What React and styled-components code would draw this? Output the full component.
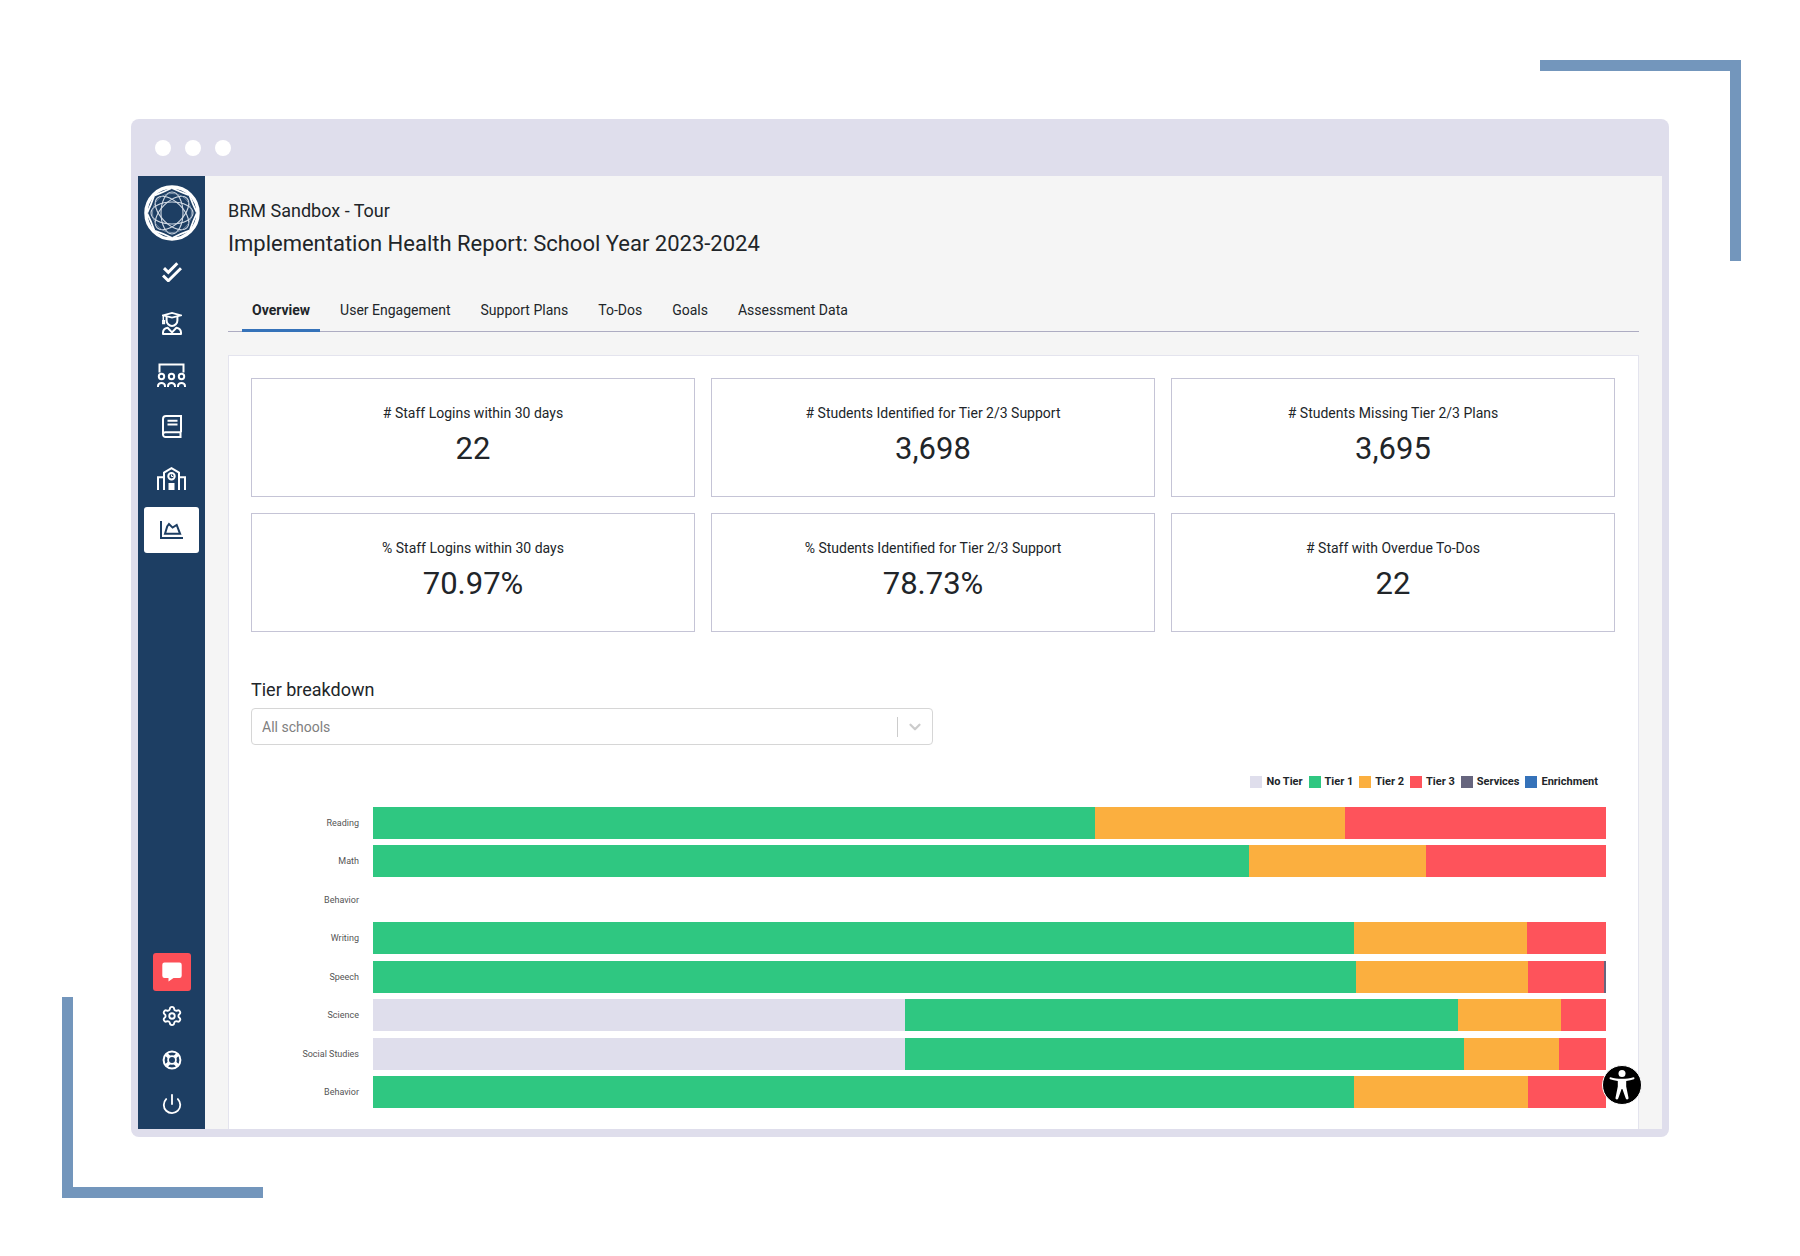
import styled, { createGlobalStyle } from "styled-components";
import { ChevronDown, Power, Settings } from "lucide-react";

const GlobalStyle = createGlobalStyle`
  * {
    box-sizing: border-box;
  }
  body {
    background-color: #ffffff;
    color: #212529;
    font-family: Roboto, "Liberation Sans", sans-serif;
    margin: 0;
  }
`;

const Page = styled.div`
  display: flex;
  flex-direction: column;
  min-height: 100vh;
  padding: 119px 131px;
  position: relative;
`;

const Corner = styled.div`
  border: 0 solid #7396bc;
  height: 201px;
  position: absolute;
  width: 201px;
`;

const CornerTop = styled(Corner)`
  border-width: 11px 11px 0 0;
  right: 59px;
  top: 60px;
`;

const CornerBottom = styled(Corner)`
  border-width: 0 0 11px 11px;
  bottom: 58px;
  left: 62px;
`;

const Window = styled.div`
  background-color: #dfdeec;
  border-radius: 8px;
  display: flex;
  flex: 1;
  flex-direction: column;
  padding: 0 7px 8px;
  position: relative;
`;

const TitleBar = styled.div`
  align-items: center;
  display: flex;
  gap: 14px;
  height: 57px;
  padding: 0 17px;
`;

const Dot = styled.span`
  background-color: #ffffff;
  border-radius: 50%;
  height: 16px;
  width: 16px;
`;

const Body = styled.div`
  background-color: #f5f5f5;
  display: flex;
  flex: 1;
`;

const SidebarWrapper = styled.aside`
  align-items: center;
  background-color: #1d3e63;
  display: flex;
  flex-direction: column;
  justify-content: space-between;
  padding: 9px 0 6px;
  width: 67px;
`;

const Nav = styled.nav`
  align-items: center;
  display: flex;
  flex-direction: column;
  gap: 8px;
`;

const NavItems = styled.div`
  display: flex;
  flex-direction: column;
  height: 304px;
  justify-content: space-between;
`;

const NavLink = styled.a`
  align-items: center;
  background-color: ${({ $active }) => ($active ? "#ffffff" : "transparent")};
  border-radius: 3px;
  color: ${({ $active }) => ($active ? "#1d3e63" : "#ffffff")};
  display: flex;
  height: 46px;
  justify-content: center;
  width: 55px;
`;

const Tools = styled.div`
  display: flex;
  flex-direction: column;
  gap: 6px;
`;

const ToolButton = styled.button`
  align-items: center;
  background-color: ${({ $alert }) => ($alert ? "#fc4f57" : "transparent")};
  border: 0;
  border-radius: 3px;
  color: #ffffff;
  cursor: pointer;
  display: flex;
  height: 38px;
  justify-content: center;
  padding: 0;
  width: 38px;
`;

const Main = styled.main`
  display: flex;
  flex: 1;
  flex-direction: column;
  padding: 20px 23px 0;
`;

const Account = styled.p`
  font-size: 18px;
  line-height: 30px;
  margin: 0;
`;

const Title = styled.h1`
  font-size: 22px;
  font-weight: 400;
  line-height: 36px;
  margin: 0;
`;

const Tabs = styled.div`
  border-bottom: 1px solid #adacc2;
  display: flex;
  gap: 10px;
  margin-top: 29px;
  padding: 0 14px;
`;

const Tab = styled.button`
  background: none;
  border: 0;
  border-bottom: 3px solid
    ${({ $active }) => ($active ? "#3572b9" : "transparent")};
  color: inherit;
  cursor: pointer;
  font-family: inherit;
  font-size: 14px;
  font-weight: ${({ $active }) => ($active ? 700 : 400)};
  height: 41px;
  margin-bottom: -1px;
  padding: 0 10px;
`;

const Panel = styled.section`
  background-color: #ffffff;
  border: 1px solid #e4e4ee;
  border-bottom: 0;
  flex: 1;
  margin-top: 23px;
  padding: 22px 23px 18px 22px;
`;

const Cards = styled.div`
  display: grid;
  gap: 16px;
  grid-template-columns: repeat(3, 1fr);
`;

const Card = styled.div`
  align-items: center;
  border: 1px solid #c5c4d6;
  display: flex;
  flex-direction: column;
  height: 119px;
  padding-top: 22px;
`;

const CardLabel = styled.p`
  font-size: 14px;
  line-height: 24px;
  margin: 0;
`;

const CardValue = styled.p`
  font-size: 31px;
  line-height: 48px;
  margin: 0;
`;

const FieldLabel = styled.label`
  display: block;
  font-size: 18px;
  line-height: 28px;
  margin-top: 44px;
`;

const SelectBox = styled.div`
  align-items: center;
  border: 1px solid #d6d6d6;
  border-radius: 4px;
  color: #cccccc;
  display: flex;
  height: 37px;
  margin-top: 4px;
  width: 50%;
`;

const Select = styled.select`
  appearance: none;
  background: none;
  border: 0;
  color: #808080;
  flex: 1;
  font-family: inherit;
  font-size: 14px;
  height: 100%;
  padding: 0 10px;
`;

const SelectArrow = styled.span`
  align-items: center;
  border-left: 1px solid #cccccc;
  display: flex;
  height: 20px;
  justify-content: center;
  pointer-events: none;
  width: 35px;
`;

const Legend = styled.ul`
  display: flex;
  gap: 6px;
  justify-content: flex-end;
  list-style: none;
  margin: 29px 17px 0 0;
  padding: 0;
`;

const LegendItem = styled.li`
  align-items: center;
  display: flex;
  font-size: 11px;
  font-weight: 700;
  gap: 4px;
  line-height: 16px;
`;

const Swatch = styled.span`
  background-color: ${({ $color }) => $color};
  height: 12px;
  width: 12px;
`;

const Chart = styled.div`
  display: flex;
  flex-direction: column;
  height: 301px;
  justify-content: space-between;
  margin-top: 17px;
  padding-right: 9px;
`;

const Row = styled.div`
  align-items: center;
  display: flex;
  height: 32px;
`;

const RowLabel = styled.span`
  color: #555555;
  font-size: 9px;
  padding-right: 14px;
  text-align: right;
  width: 122px;
`;

const Bar = styled.div`
  display: flex;
  flex: 1;
  height: 100%;
`;

const Segment = styled.div`
  background-color: ${({ $color }) => $color};
`;

const AccessButton = styled.button`
  align-items: center;
  background-color: #000000;
  border: 1px solid #ffffff;
  border-radius: 50%;
  bottom: 32px;
  cursor: pointer;
  display: flex;
  height: 40px;
  justify-content: center;
  padding: 0;
  position: absolute;
  right: 27px;
  width: 40px;
`;

const Svg = ({ width, height, children }) => (
  <svg
    width={width}
    height={height}
    viewBox={`0 0 ${width} ${height}`}
    fill="none"
    stroke="currentColor"
    strokeWidth="2"
    aria-hidden="true"
  >
    {children}
  </svg>
);

const Logo = () => (
  <svg width="56" height="56" viewBox="-28 -28 56 56" fill="none">
    <circle r="26" stroke="#ffffff" strokeWidth="3.5" />
    {[0, 45, 90, 135, 180, 225, 270, 315].map((angle) => (
      <path
        key={angle}
        d="M-9 -23 Q0 -22.500 9 -23"
        stroke="#ffffff"
        strokeWidth="1.8"
        transform={`rotate(${angle + 22})`}
      />
    ))}
    {[0, 45, 90, 135].map((angle) => (
      <g key={angle} stroke="#d3dbe5" transform={`rotate(${angle})`}>
        <ellipse rx="21" ry="11" strokeWidth="1.1" />
      </g>
    ))}
    <circle r="19.500" stroke="#8ea1b7" strokeWidth="0.8" />
  </svg>
);

const TasksIcon = () => (
  <Svg width={20} height={20}>
    <path d="M2 6.2l4.3 4.1 9-9M1 13.5l5.3 5.2L19 6.2" strokeWidth="3" />
  </Svg>
);

const StudentIcon = () => (
  <Svg width={20} height={23}>
    <path d="M1.2 3.4L10 1l8.8 2.4L10 5.6z" strokeWidth="1.8" />
    <path d="M1.3 4v5.500M.8 8v3.500h1.600V8" strokeWidth="1.5" />
    <path d="M4.600 4.800v3.700a5.400 5.400 0 0 0 10.800 0V4.800" />
    <path
      d="M5.600 15.800C2.800 16.400 1 18 1 20.500V22h18v-1.500c0-2.500-1.800-4.100-4.600-4.700L10 20.400z"
      strokeLinejoin="round"
    />
  </Svg>
);

const ClassIcon = () => (
  <Svg width={29} height={24}>
    <path d="M2.5 9.5V1.5h24v8" />
    {[4.5, 14.5, 24.5].map((x) => (
      <g key={x}>
        <circle cx={x} cy="13.5" r="2.7" />
        <path d={`M${x - 3.5} 24v-1a3.5 3 0 0 1 7 0v1`} />
      </g>
    ))}
  </Svg>
);

const BookIcon = () => (
  <Svg width={20} height={23}>
    <path d="M19 17.200V1H4a3 3 0 0 0-3 3v15.500A2.500 2.500 0 0 0 3.500 22H19.500M19 17.200H3.500A2.500 2.500 0 0 0 1 19.500M18.500 17v5" />
    <path d="M5.500 5.800h10M5.500 9.400h10" />
  </Svg>
);

const SchoolIcon = () => (
  <Svg width={29} height={23}>
    <path d="M7 23V5.600L14.500 1.200 22 5.600V23M1 23V10.200h6M28 23V10.200h-6" />
    <circle cx="14.500" cy="9.200" r="3.200" />
    <path d="M14.500 7.500v2h1.800" strokeWidth="1" />
    <path d="M11.500 16h6v7h-6z" fill="currentColor" stroke="none" />
  </Svg>
);

const ReportIcon = () => (
  <Svg width={23} height={18}>
    <path d="M1 0v17h22" />
    <path d="M5 12.800l2.200-7.300L9 3l3.600 3.600L16.700 4l3.400 8.800z" />
  </Svg>
);

const FeedbackIcon = () => (
  <Svg width={20} height={20}>
    <path
      d="M2.500 .5h15a2.200 2.200 0 0 1 2.200 2.200v11a2.200 2.200 0 0 1-2.200 2.200h-6l-5 3.600v-3.600h-4a2.200 2.200 0 0 1-2.200-2.200v-11a2.200 2.200 0 0 1 2.200-2.200z"
      fill="currentColor"
      stroke="none"
    />
  </Svg>
);

const HelpIcon = () => (
  <Svg width={20} height={20}>
    <circle cx="10" cy="10" r="8.400" />
    <circle cx="10" cy="10" r="3.900" strokeWidth="1.800" />
    <path
      d="M4.400 4.400l2.700 2.700M15.600 4.400l-2.700 2.700M4.400 15.600l2.700-2.700M15.600 15.600l-2.700-2.700"
      strokeWidth="3.600"
    />
  </Svg>
);

const PersonIcon = () => (
  <svg width="26" height="32" viewBox="0 0 26 32" fill="#ffffff">
    <circle cx="13" cy="4.600" r="3.500" />
    <path d="M1.500 8.300C5 9.500 9 9.800 13 9.800s8-.3 11.500-1.500c1-.2 1.400 1.500.4 1.900-2.400.9-5 1.400-7.700 1.700v5.600l2.300 11.300c.3 1.800-2.100 2.400-2.700.7L13.400 20h-.8L9.200 29.500c-.6 1.700-3 1.100-2.700-.7l2.300-11.300v-5.600c-2.700-.3-5.300-.8-7.700-1.700-1-.4-.6-2.100.4-1.900z" />
  </svg>
);

const navigation = [
  { name: "Tasks", Icon: TasksIcon },
  { name: "Students", Icon: StudentIcon },
  { name: "Classes", Icon: ClassIcon },
  { name: "Library", Icon: BookIcon },
  { name: "Schools", Icon: SchoolIcon },
  { name: "Reports", Icon: ReportIcon, active: true },
];

const tabs = [
  "Overview",
  "User Engagement",
  "Support Plans",
  "To-Dos",
  "Goals",
  "Assessment Data",
];

const stats = [
  { label: "# Staff Logins within 30 days", value: "22" },
  { label: "# Students Identified for Tier 2/3 Support", value: "3,698" },
  { label: "# Students Missing Tier 2/3 Plans", value: "3,695" },
  { label: "% Staff Logins within 30 days", value: "70.97%" },
  { label: "% Students Identified for Tier 2/3 Support", value: "78.73%" },
  { label: "# Staff with Overdue To-Dos", value: "22" },
];

const tiers = [
  { name: "No Tier", color: "#dfdeec" },
  { name: "Tier 1", color: "#2fc781" },
  { name: "Tier 2", color: "#fbaf3f" },
  { name: "Tier 3", color: "#fe535b" },
  { name: "Services", color: "#66657e" },
  { name: "Enrichment", color: "#3572b9" },
];

// values follow the order of the tiers
const subjects = [
  { name: "Reading", values: [0, 722, 250, 261, 0, 0] },
  { name: "Math", values: [0, 876, 177, 180, 0, 0] },
  { name: "Behavior", values: [0, 0, 0, 0, 0, 0] },
  { name: "Writing", values: [0, 981, 173, 79, 0, 0] },
  { name: "Speech", values: [0, 983, 172, 76, 2, 0] },
  { name: "Science", values: [532, 553, 103, 45, 0, 0] },
  { name: "Social Studies", values: [532, 559, 95, 47, 0, 0] },
  { name: "Behavior", values: [0, 981, 174, 78, 0, 0] },
];

const Sidebar = () => (
  <SidebarWrapper>
    <Nav>
      <Logo />
      <NavItems>
        {navigation.map(({ name, Icon, active }) => (
          <NavLink key={name} href="#" aria-label={name} $active={active}>
            <Icon />
          </NavLink>
        ))}
      </NavItems>
    </Nav>
    <Tools>
      <ToolButton $alert aria-label="Feedback">
        <FeedbackIcon />
      </ToolButton>
      <ToolButton aria-label="Settings">
        <Settings size={22} />
      </ToolButton>
      <ToolButton aria-label="Help">
        <HelpIcon />
      </ToolButton>
      <ToolButton aria-label="Log out">
        <Power size={22} />
      </ToolButton>
    </Tools>
  </SidebarWrapper>
);

const TierChart = () => (
  <>
    <Legend>
      {tiers.map(({ name, color }) => (
        <LegendItem key={name}>
          <Swatch $color={color} />
          {name}
        </LegendItem>
      ))}
    </Legend>
    <Chart>
      {subjects.map(({ name, values }, row) => {
        const total = values.reduce((sum, value) => sum + value, 0);
        return (
          <Row key={row}>
            <RowLabel>{name}</RowLabel>
            <Bar>
              {values.map((value, i) =>
                value > 0 ? (
                  <Segment
                    key={tiers[i].name}
                    $color={tiers[i].color}
                    style={{ width: `${(value / total) * 100}%` }}
                  />
                ) : null
              )}
            </Bar>
          </Row>
        );
      })}
    </Chart>
  </>
);

const App = () => (
  <Page>
    <GlobalStyle />
    <CornerTop />
    <CornerBottom />
    <Window>
      <TitleBar>
        <Dot />
        <Dot />
        <Dot />
      </TitleBar>
      <Body>
        <Sidebar />
        <Main>
          <Account>BRM Sandbox - Tour</Account>
          <Title>Implementation Health Report: School Year 2023-2024</Title>
          <Tabs role="tablist">
            {tabs.map((tab, i) => (
              <Tab
                key={tab}
                role="tab"
                aria-selected={i === 0}
                $active={i === 0}
              >
                {tab}
              </Tab>
            ))}
          </Tabs>
          <Panel>
            <Cards>
              {stats.map(({ label, value }) => (
                <Card key={label}>
                  <CardLabel>{label}</CardLabel>
                  <CardValue>{value}</CardValue>
                </Card>
              ))}
            </Cards>
            <FieldLabel htmlFor="school">Tier breakdown</FieldLabel>
            <SelectBox>
              <Select id="school">
                <option>All schools</option>
              </Select>
              <SelectArrow>
                <ChevronDown size={18} strokeWidth={3} />
              </SelectArrow>
            </SelectBox>
            <TierChart />
          </Panel>
        </Main>
      </Body>
      <AccessButton aria-label="Accessibility options">
        <PersonIcon />
      </AccessButton>
    </Window>
  </Page>
);

export default App;
